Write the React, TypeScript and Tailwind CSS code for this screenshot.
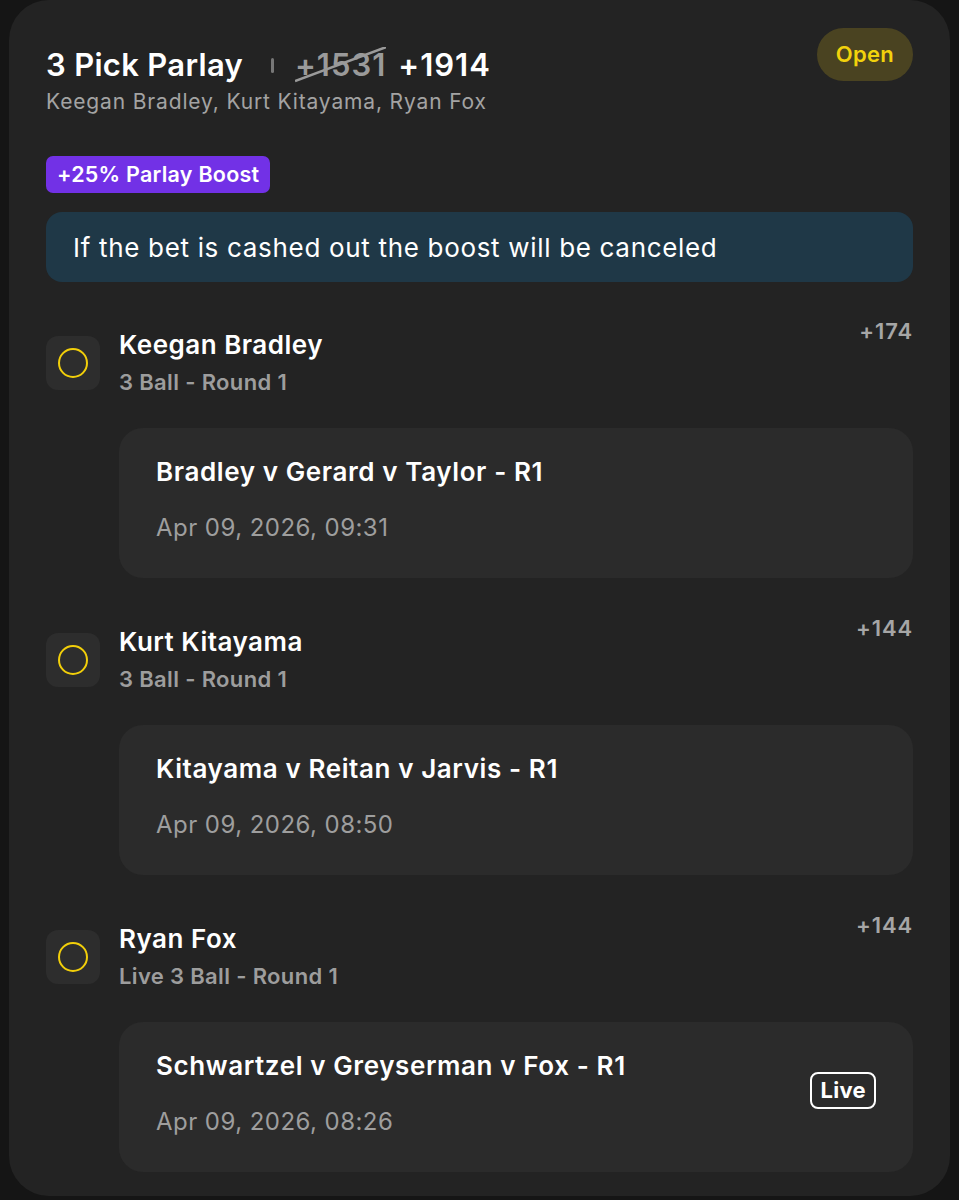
type Leg = {
  player: string;
  market: string;
  odds: string;
  matchup: string;
  startsAt: string;
  live?: boolean;
};

const legs: Leg[] = [
  {
    player: "Keegan Bradley",
    market: "3 Ball - Round 1",
    odds: "+174",
    matchup: "Bradley v Gerard v Taylor - R1",
    startsAt: "Apr 09, 2026, 09:31",
  },
  {
    player: "Kurt Kitayama",
    market: "3 Ball - Round 1",
    odds: "+144",
    matchup: "Kitayama v Reitan v Jarvis - R1",
    startsAt: "Apr 09, 2026, 08:50",
  },
  {
    player: "Ryan Fox",
    market: "Live 3 Ball - Round 1",
    odds: "+144",
    matchup: "Schwartzel v Greyserman v Fox - R1",
    startsAt: "Apr 09, 2026, 08:26",
    live: true,
  },
];

function PendingIcon() {
  return (
    <div className="flex h-[54px] w-[54px] shrink-0 items-center justify-center rounded-[12px] bg-[#2d2d2d]">
      <span className="block h-[30px] w-[30px] rounded-full border-[2.5px] border-[#f2cf0a]" />
    </div>
  );
}

function LegRow({ leg }: { leg: Leg }) {
  return (
    <div>
      <div className="flex items-start justify-between">
        <div className="flex items-center gap-[19px] pt-[12px]">
          <PendingIcon />
          <div>
            <p className="text-[26px] font-semibold leading-[32px] tracking-[0.5px] text-white">
              {leg.player}
            </p>
            <p className="mt-[7px] text-[22px] font-semibold leading-[28px] tracking-[0.35px] text-[#9d9d9d]">
              {leg.market}
            </p>
          </div>
        </div>
        <span className="text-[22px] font-semibold leading-[28px] tracking-[0.9px] text-[#a6a6a6]">
          {leg.odds}
        </span>
      </div>
      <div className="ml-[73px] mt-[32px] flex items-center justify-between rounded-[24px] bg-[#2b2b2b] px-[37px] pb-[35px] pt-[28px]">
        <div>
          <p className="text-[26px] font-semibold leading-[32px] tracking-[0.6px] text-white">
            {leg.matchup}
          </p>
          <p className="mt-[25px] text-[24px] leading-[30px] tracking-[0.45px] text-[#9e9e9e]">
            {leg.startsAt}
          </p>
        </div>
        {leg.live ? (
          <span className="-mt-[6px] rounded-[8px] border-2 border-white px-[8px] py-[2px] text-[22px] font-bold leading-[29px] tracking-[0.3px] text-white">
            Live
          </span>
        ) : null}
      </div>
    </div>
  );
}

export default function App() {
  return (
    <div
      className="min-h-screen bg-[#151515] px-[9px]"
      style={{ fontFamily: "Inter, 'Noto Sans', sans-serif" }}
    >
      <div className="rounded-[40px] bg-[#232323] px-[37px] pb-[24px] pt-[28px]">
        <div className="flex items-start justify-between">
          <div className="pt-[19px]">
            <div className="flex items-center">
              <h1 className="text-[31px] font-semibold leading-[36px] tracking-[0.3px] text-white">
                3 Pick Parlay
              </h1>
              <span className="ml-[28px] mt-[1px] block h-[15px] w-[3px] rounded-full bg-[#777777]" />
              <span className="relative ml-[21px] text-[31px] font-semibold leading-[36px] tracking-[1px] text-[#9a9a9a]">
                +1531
                <svg
                  className="absolute inset-0 h-full w-full"
                  viewBox="0 0 90 36"
                  preserveAspectRatio="none"
                  aria-hidden
                >
                  <line x1="0" y1="34" x2="90" y2="0" stroke="#9a9a9a" strokeWidth="2.5" />
                </svg>
              </span>
              <span className="ml-[12px] text-[31px] font-semibold leading-[36px] tracking-[1px] text-white">
                +1914
              </span>
            </div>
            <p className="mt-[5px] text-[21px] leading-[28px] tracking-[0.85px] text-[#a3a3a3]">
              Keegan Bradley, Kurt Kitayama, Ryan Fox
            </p>
          </div>
          <span className="flex h-[53px] items-center rounded-full bg-[#4a4321] px-[19px] text-[22px] font-semibold tracking-[0.3px] text-[#f2d20c]">
            Open
          </span>
        </div>

        <span className="mt-[40px] inline-flex h-[37px] items-center rounded-[7px] bg-[#7231e6] px-[11px] text-[21.5px] font-semibold tracking-[0.25px] text-white">
          +25% Parlay Boost
        </span>

        <div className="mt-[19px] flex h-[70px] items-center rounded-[16px] bg-[#1f3847] px-[27px] text-[26px] tracking-[0.68px] text-white">
          If the bet is cashed out the boost will be canceled
        </div>

        <div className="mt-[35px] space-y-[36px]">
          {legs.map((leg) => (
            <LegRow key={leg.player} leg={leg} />
          ))}
        </div>
      </div>
    </div>
  );
}
